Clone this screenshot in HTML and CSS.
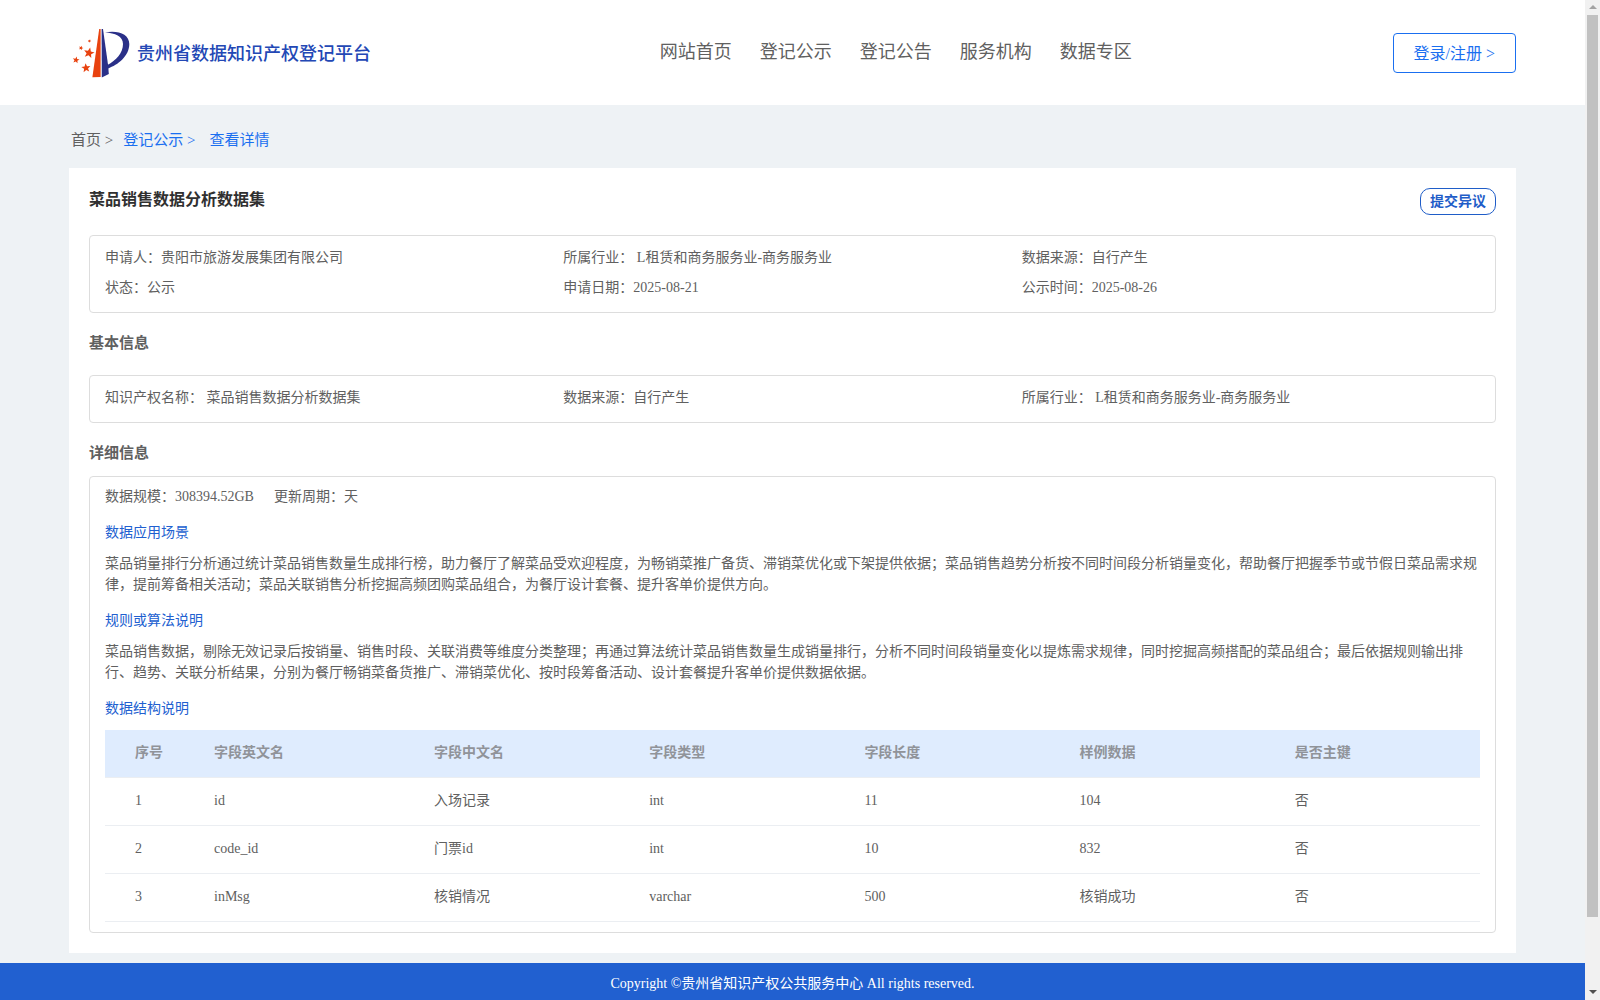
FILE: index.html
```html
<!DOCTYPE html>
<html lang="zh-CN">
<head>
<meta charset="utf-8">
<title>贵州省数据知识产权登记平台</title>
<link rel="stylesheet" href="styles.css">
</head>
<body>
<div class="page">
  <header class="header">
    <a class="brand" href="#">
      <svg class="brand-mark" viewBox="0 0 60 50" aria-hidden="true">
        <defs><polygon id="star" points="0,-10 2.6,-3.4 9.5,-3.1 4.1,1.3 5.9,8.1 0,4.3 -5.9,8.1 -4.1,1.3 -9.5,-3.1 -2.6,-3.4"/></defs>
        <path fill="#e8420f" d="M27.2 0h1.4v48l-8.2.3z"/>
        <path fill="#2a3088" d="M29.6 0H31l5.2 37 .6 8-7 3.4z"/>
        <path fill="#2a3088" d="M33 3.4C46 1 57.3 5 57.3 15 57.3 27 46 36 36 39.4L35.4 36C44 31.500 51 24 51 15 51 7 43 4 33 3.400z"/>
        <g fill="#e8420f">
          <use href="#star" transform="translate(17 24) rotate(12) scale(.56)"/>
          <use href="#star" transform="translate(14 39) rotate(-6) scale(.48)"/>
          <use href="#star" transform="translate(4 31) rotate(10) scale(.36)"/>
          <use href="#star" transform="translate(9 19) rotate(20) scale(.24)"/>
          <use href="#star" transform="translate(17.500 12) rotate(20) scale(.18)"/>
        </g>
      </svg>
      <span class="brand-name">贵州省数据知识产权登记平台</span>
    </a>
    <nav class="nav">
      <a href="#">网站首页</a>
      <a href="#">登记公示</a>
      <a href="#">登记公告</a>
      <a href="#">服务机构</a>
      <a href="#">数据专区</a>
    </nav>
    <button class="login" type="button">登录/注册 &gt;</button>
  </header>

  <main class="main">
    <nav class="crumbs">
      <a class="crumb-home" href="#">首页 &gt;</a>
      <a href="#">登记公示 &gt;</a>
      <a class="crumb-current" href="#">查看详情</a>
    </nav>

    <article class="card">
      <div class="card-head">
        <h1>菜品销售数据分析数据集</h1>
        <button class="objection" type="button">提交异议</button>
      </div>

      <div class="panel facts">
        <div>申请人：贵阳市旅游发展集团有限公司</div>
        <div>所属行业： L租赁和商务服务业-商务服务业</div>
        <div>数据来源：自行产生</div>
        <div>状态：公示</div>
        <div>申请日期：2025-08-21</div>
        <div>公示时间：2025-08-26</div>
      </div>

      <h2 class="basic-title">基本信息</h2>
      <div class="panel facts">
        <div>知识产权名称： 菜品销售数据分析数据集</div>
        <div>数据来源：自行产生</div>
        <div>所属行业： L租赁和商务服务业-商务服务业</div>
      </div>

      <h2 class="detail-title">详细信息</h2>
      <section class="panel detail">
        <div class="scale"><span>数据规模：308394.52GB</span><span>更新周期：天</span></div>
        <h3>数据应用场景</h3>
        <p>菜品销量排行分析通过统计菜品销售数量生成排行榜，助力餐厅了解菜品受欢迎程度，为畅销菜推广备货、滞销菜优化或下架提供依据；菜品销售趋势分析按不同时间段分析销量变化，帮助餐厅把握季节或节假日菜品需求规律，提前筹备相关活动；菜品关联销售分析挖掘高频团购菜品组合，为餐厅设计套餐、提升客单价提供方向。</p>
        <h3>规则或算法说明</h3>
        <p>菜品销售数据，剔除无效记录后按销量、销售时段、关联消费等维度分类整理；再通过算法统计菜品销售数量生成销量排行，分析不同时间段销量变化以提炼需求规律，同时挖掘高频搭配的菜品组合；最后依据规则输出排行、趋势、关联分析结果，分别为餐厅畅销菜备货推广、滞销菜优化、按时段筹备活动、设计套餐提升客单价提供数据依据。</p>
        <h3>数据结构说明</h3>
        <table class="fields">
          <colgroup><col class="col-index"><col class="col-name"><col class="col-std"><col class="col-std"><col class="col-std"><col class="col-std"><col></colgroup>
          <thead>
            <tr><th>序号</th><th>字段英文名</th><th>字段中文名</th><th>字段类型</th><th>字段长度</th><th>样例数据</th><th>是否主键</th></tr>
          </thead>
          <tbody>
            <tr><td>1</td><td>id</td><td>入场记录</td><td>int</td><td>11</td><td>104</td><td>否</td></tr>
            <tr><td>2</td><td>code_id</td><td>门票id</td><td>int</td><td>10</td><td>832</td><td>否</td></tr>
            <tr><td>3</td><td>inMsg</td><td>核销情况</td><td>varchar</td><td>500</td><td>核销成功</td><td>否</td></tr>
          </tbody>
        </table>
      </section>
    </article>
  </main>

  <footer class="footer">Copyright ©贵州省知识产权公共服务中心 All rights reserved.</footer>
</div>
<div class="scrollbar" aria-hidden="true">
  <svg class="arrow" viewBox="0 0 15 15"><path fill="#a3a3a3" d="M4 9l4-4 4 4z"/></svg>
  <div class="track"><div class="thumb"></div></div>
  <svg class="arrow" viewBox="0 0 15 15"><path fill="#505050" d="M4 5h8L8 9z"/></svg>
</div>
</body>
</html>
```
FILE: styles.css
```css
* { box-sizing: border-box; }
body {
  margin: 0;
  display: flex;
  font-family: "Liberation Serif", "Noto Sans CJK SC", serif;
  font-size: 14px;
  line-height: 20px;
  color: #606060;
  background: #eef2f5;
}
a { color: inherit; text-decoration: none; }
button { font-family: inherit; background: #fff; cursor: pointer; }
h1, h2, h3, p { margin: 0; }

.page { flex: 1; min-width: 0; min-height: 100vh; display: flex; flex-direction: column; }

.header {
  display: flex;
  align-items: center;
  min-height: 105px;
  padding: 0 69px;
  background: #fff;
}
.brand { display: flex; align-items: center; gap: 5px; padding: 3px 0 0 3px; }
.brand-mark { width: 60px; height: 50px; }
.brand-name { font-size: 18px; font-weight: 500; line-height: 24px; color: #2348b5; }
.nav { display: flex; margin: 0 auto; font-size: 18px; line-height: 24px; padding-bottom: 2px; }
.nav a { padding-left: 28px; }
.login {
  height: 40px;
  padding: 0 20px 2px;
  border: 1px solid #1a6ff0;
  border-radius: 4px;
  font-size: 16px;
  color: #1a6ff0;
}

.main { flex: 1; padding: 0 69px 10px; }
.crumbs { display: flex; gap: 10px; padding: 25px 2px 18px; font-size: 15px; color: #1a6ff0; }
.crumb-home { color: #606060; }
.crumb-current { padding-left: 4px; }

.card { padding: 20px; background: #fff; }
.card-head { display: flex; justify-content: space-between; align-items: flex-start; margin-bottom: 20px; }
h1 { font-size: 16px; line-height: 24px; color: #303030; }
.objection {
  height: 27px;
  padding: 0 9px 3px;
  border: 1px solid #1f5dc8;
  border-radius: 10px;
  font-size: 14px;
  font-weight: bold;
  color: #1f5dc8;
}
.panel { padding: 0 15px; border: 1px solid #ddd; border-radius: 4px; }
.facts {
  display: grid;
  grid-template-columns: repeat(3, 1fr);
  row-gap: 10px;
  padding-top: 12px;
  padding-bottom: 14px;
}
h2 { font-size: 15px; line-height: 20px; }
.basic-title { margin: 20px 0 22px; }
.detail-title { margin: 20px 0 13px; }

.detail { padding-top: 10px; padding-bottom: 10px; }
.scale { display: flex; gap: 20px; }
h3 { margin: 16px 0 10px; font-size: 14px; font-weight: normal; line-height: 20px; color: #2160d0; }
.detail p { line-height: 21px; }

.fields { width: 100%; margin-top: 11px; border-collapse: separate; border-spacing: 0; table-layout: fixed; }
.col-index { width: 7.2%; }
.col-name { width: 16%; }
.col-std { width: 15.65%; }
.fields th, .fields td {
  height: 48px;
  padding: 0 10px 1px;
  border-bottom: 1px solid #ebeef2;
  text-align: left;
}
.fields th { background: #dfecfe; color: #909399; }
.fields th:first-child, .fields td:first-child { padding-left: 30px; }

.footer { padding: 11px 0 6px; background: #2160d0; color: #fff; text-align: center; }

.scrollbar {
  position: sticky;
  top: 0;
  width: 15px;
  height: 100vh;
  display: flex;
  flex-direction: column;
  background: #f1f1f1;
}
.arrow { width: 15px; height: 15px; }
.track { flex: 1; padding: 0 2px; }
.thumb { height: 93%; background: #c1c1c1; }
```
